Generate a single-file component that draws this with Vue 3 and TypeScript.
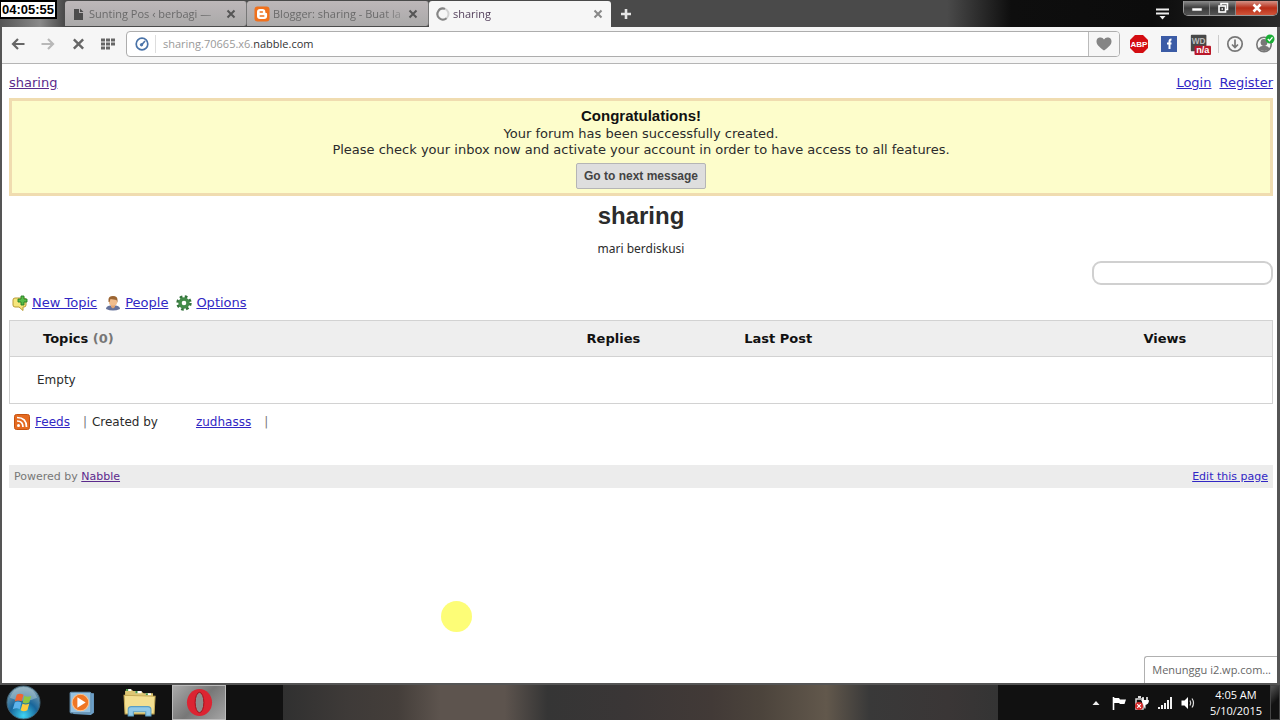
<script setup lang="ts">
import { ref } from 'vue'

interface Tab {
  title: string
  icon: 'page' | 'blogger' | 'spinner'
  active: boolean
}

const tabs: Tab[] = [
  { title: 'Sunting Pos ‹ berbagi —', icon: 'page', active: false },
  { title: 'Blogger: sharing - Buat la', icon: 'blogger', active: false },
  { title: 'sharing', icon: 'spinner', active: true },
]

const search = ref('')
</script>

<template>
  <div class="desktop">
    <div class="timer">04:05:55</div>

    <header class="titlebar">
      <div v-for="tab in tabs" :key="tab.title" class="tab" :class="{ active: tab.active }">
        <svg v-if="tab.icon === 'page'" class="tab-icon" viewBox="0 0 14 14">
          <path d="M2 2h5v4h4v7H2z" fill="#4c4c4c" /><path d="M8 1.500L11.500 5H8z" fill="#4c4c4c" />
        </svg>
        <svg v-else-if="tab.icon === 'blogger'" class="tab-icon big" viewBox="0 0 16 16">
          <rect x="0.500" y="0.500" width="15" height="15" rx="3" fill="#f0701c" />
          <path d="M6 3h2.500A2.800 2.800 0 0 1 11.300 5.800c0 .8.2 1.200 1 1.200.5 0 .8.3.8.8V10a3 3 0 0 1-3 3H6a3 3 0 0 1-3-3V6a3 3 0 0 1 3-3z" fill="#fff" />
          <path d="M6.200 6h2.200M6.200 10h3.600" stroke="#f0701c" stroke-width="1.500" stroke-linecap="round" />
        </svg>
        <svg v-else class="tab-icon" viewBox="0 0 14 14" fill="none" stroke-width="2">
          <circle cx="7" cy="7" r="5.500" stroke="#d2d2d2" />
          <path d="M9 1.900A5.500 5.500 0 1 0 10.500 11.200" stroke="#858585" />
        </svg>
        <span class="tab-title">{{ tab.title }}</span>
        <button class="tab-close" aria-label="Close tab">
          <svg viewBox="0 0 10 10"><path d="M1.500 1.500l7 7M8.500 1.500l-7 7" stroke="currentColor" stroke-width="2" /></svg>
        </button>
      </div>
      <button class="new-tab" aria-label="New tab">
        <svg viewBox="0 0 12 12"><path d="M6 1v10M1 6h10" stroke="#e4e4e4" stroke-width="2.600" /></svg>
      </button>
      <button class="tab-menu" aria-label="Tab menu">
        <svg viewBox="0 0 13 12"><path d="M0 1.500h13M0 5.500h13" stroke="#eee" stroke-width="1.800" /><path d="M3.500 8h6l-3 3.500z" fill="#eee" /></svg>
      </button>
      <div class="window-buttons">
        <button aria-label="Minimize">
          <svg viewBox="0 0 14 12"><rect x="2" y="6" width="10" height="3" fill="#fff" stroke="#555" stroke-width="0.600" /></svg>
        </button>
        <button aria-label="Restore">
          <svg viewBox="0 0 14 12" fill="none" stroke="#fff" stroke-width="1.600"><path d="M5 3V1.500h6.500v6H10" /><rect x="3" y="4" width="6.500" height="6" /><path d="M5.500 7h1.500" /></svg>
        </button>
        <button class="close" aria-label="Close">
          <svg viewBox="0 0 14 12"><path d="M3.500 2.500l7 7M10.500 2.500l-7 7" stroke="#fff" stroke-width="2.600" /></svg>
        </button>
      </div>
    </header>

    <div class="window">
      <nav class="toolbar">
        <button class="tool" aria-label="Back">
          <svg viewBox="0 0 14 14" fill="none" stroke="#666" stroke-width="2.200"><path d="M13.500 7H2M7 2L2 7l5 5" /></svg>
        </button>
        <button class="tool" aria-label="Forward">
          <svg viewBox="0 0 14 14" fill="none" stroke="#b8b8b8" stroke-width="2.200"><path d="M.5 7H12M7 2l5 5-5 5" /></svg>
        </button>
        <button class="tool stop" aria-label="Stop">
          <svg viewBox="0 0 14 14" fill="none" stroke="#666" stroke-width="2.600"><path d="M2 2l10 10M12 2L2 12" /></svg>
        </button>
        <button class="tool" aria-label="Speed dial">
          <svg viewBox="0 0 14 14" fill="#666"><path d="M0 1.500h4v3H0zM5 1.500h4v3H5zM10 1.500h4v3h-4zM0 5.500h4v3H0zM5 5.500h4v3H5zM10 5.500h4v3h-4zM0 9.500h4v3H0zM5 9.500h4v3H5z" /></svg>
        </button>
        <div class="address">
          <svg class="badge" viewBox="0 0 14 14" fill="none" stroke="#4a73a8"><circle cx="7" cy="7" r="5.800" stroke-width="1.700" /><path d="M6.500 8L10 4" stroke-width="1.600" /><circle cx="6.500" cy="7.800" r="1.200" fill="#4a73a8" /></svg>
          <span class="divider"></span>
          <span class="url">sharing.70665.x6.<b>nabble.com</b></span>
          <button class="heart" aria-label="Bookmark">
            <svg viewBox="0 0 16 14"><path d="M8 13.500C3 9.800.5 7.500.5 4.500A4 4 0 0 1 8 2.500a4 4 0 0 1 7.500 2c0 3-2.500 5.300-7.500 9z" fill="#858585" /></svg>
          </button>
        </div>
        <div class="extensions">
          <button aria-label="Adblock Plus">
            <svg viewBox="0 0 20 20"><path d="M6 1h8l5 5v8l-5 5H6l-5-5V6z" fill="#d40d12" /><text x="10" y="13" text-anchor="middle" class="abp">ABP</text></svg>
          </button>
          <button aria-label="Facebook">
            <svg viewBox="0 0 20 20"><rect x="2" y="2" width="16" height="16" fill="#3b5ba5" /><path d="M10.500 15V7.500Q10.500 5.500 12.500 5.500M8 9.500h4.500" stroke="#fff" stroke-width="2" fill="none" /></svg>
          </button>
          <button aria-label="WD">
            <svg viewBox="0 0 24 24"><rect x="2" y="2" width="17" height="18" rx="1" fill="#484848" /><text x="10.500" y="12" text-anchor="middle" class="wd">WD</text><rect x="6" y="14" width="18" height="10" rx="1" fill="#b9182a" /><text x="15" y="22" text-anchor="middle" class="na">n/a</text></svg>
          </button>
          <span class="rule"></span>
          <button aria-label="Downloads">
            <svg viewBox="0 0 20 20" fill="none" stroke="#777" stroke-width="1.700"><circle cx="10" cy="10" r="7.200" /><path d="M10 5.500v8M7 10.500l3 3 3-3" /></svg>
          </button>
          <button aria-label="Account">
            <svg viewBox="0 0 20 20"><circle cx="9" cy="10.500" r="7.200" fill="none" stroke="#777" stroke-width="1.600" /><circle cx="9" cy="8.500" r="3.400" fill="#777" /><path d="M3.500 15q1-3 4-3h3q3 0 4 3-5 4-11 0z" fill="#777" /><circle cx="15" cy="5" r="4.500" fill="#19ae35" /><path d="M12.800 5l1.700 1.700 3-3.400" fill="none" stroke="#fff" stroke-width="1.300" /></svg>
          </button>
        </div>
      </nav>

      <main class="page">
        <div class="crumbs">
          <a href="#" class="visited">sharing</a>
          <span class="account"><a href="#">Login</a><a href="#">Register</a></span>
        </div>

        <section class="notice">
          <h2>Congratulations!</h2>
          <p>Your forum has been successfully created.</p>
          <p>Please check your inbox now and activate your account in order to have access to all features.</p>
          <button class="next">Go to next message</button>
        </section>

        <h1>sharing</h1>
        <p class="tagline">mari berdiskusi</p>
        <input v-model="search" class="search" type="text" aria-label="Search" />

        <div class="actions">
          <a href="#">
            <svg viewBox="0 0 16 16"><path d="M3 3h9q2 0 2 2v5q0 2-2 2h-1v3.500L7 12H3q-2 0-2-2V5q0-2 2-2z" fill="#f6e67c" stroke="#b89a35" /><path d="M9 1h3v3h3v3h-3v3H9V7H6V4h3z" fill="#57bd4a" stroke="#267d25" stroke-width="0.900" /></svg>
            <span>New Topic</span>
          </a>
          <a href="#">
            <svg viewBox="0 0 16 16"><path d="M1 14q0-3 4-3.500h6q4 .5 4 3.500-7 3-14 0z" fill="#65729b" /><path d="M6 9h4v3l-2 1.500L6 12z" fill="#e1a474" /><rect x="4" y="1.500" width="8" height="9" rx="3" fill="#f0bd8d" /><path d="M3.500 7V4Q4 1 8 1q4.500 0 4.500 4v3l-1-3-6-1-1 3z" fill="#9b6533" /></svg>
            <span>People</span>
          </a>
          <a href="#">
            <svg viewBox="0 0 16 16" fill="none"><circle cx="8" cy="8" r="6.300" stroke="#33733b" stroke-width="2.800" stroke-dasharray="2.600 2.350" /><circle cx="8" cy="8" r="4" stroke="#438b49" stroke-width="3.400" /></svg>
            <span>Options</span>
          </a>
        </div>

        <table>
          <thead>
            <tr>
              <th class="topics">Topics <span>(0)</span></th>
              <th class="replies">Replies</th>
              <th class="last">Last Post</th>
              <th class="views">Views</th>
            </tr>
          </thead>
          <tbody>
            <tr><td colspan="4">Empty</td></tr>
          </tbody>
        </table>

        <div class="meta">
          <svg viewBox="0 0 16 16" fill="none"><rect x="0.500" y="0.500" width="15" height="15" rx="2" fill="#e56a20" stroke="#c7530f" /><circle cx="4.500" cy="11.500" r="1.500" fill="#fff" /><path d="M3 7q6 0 6 6M3 3.500q9.500 0 9.500 9.500" stroke="#fff" stroke-width="1.700" /></svg>
          <a href="#">Feeds</a>
          <span class="bar">|</span>
          <span>Created by</span>
          <a href="#" class="author">zudhasss</a>
          <span class="bar">|</span>
        </div>

        <footer>
          <span>Powered by <a href="#" class="visited">Nabble</a></span>
          <a href="#" class="edit">Edit this page</a>
        </footer>

        <div class="pointer"></div>
        <div class="status">Menunggu i2.wp.com...</div>
      </main>
    </div>

    <div class="taskbar">
      <button class="start" aria-label="Start">
        <svg viewBox="0 0 36 36">
          <defs>
            <radialGradient id="orb" cx="50%" cy="90%" r="85%"><stop offset="0" stop-color="#3fd4f4" /><stop offset="0.500" stop-color="#18669b" /><stop offset="1" stop-color="#7e9fb0" /></radialGradient>
          </defs>
          <circle cx="18" cy="18" r="17" fill="url(#orb)" stroke="#406274" />
          <path d="M4 13Q8 2 18 2t14 11Q18 20 4 13z" fill="#b9d0d9" opacity="0.450" />
          <path d="M11 10q3-2 7 0l-2 7q-3-2-7 0z" fill="#ef6532" /><path d="M19 11q3 2 7 0l-2 7q-4 2-7 0z" fill="#8fc641" /><path d="M9 18q3-2 7 0l-2 7q-3-2-7 0z" fill="#5db4ec" /><path d="M17 19q3 2 7 0l-2 7q-4 2-7 0z" fill="#fccb3d" />
        </svg>
      </button>
      <button class="task" aria-label="Media Player">
        <svg viewBox="0 0 28 28"><path d="M7 4l19 1v19l-3 2-17-1z" fill="#6c9fc7" /><rect x="3" y="4" width="20" height="20" rx="1" fill="#96c2e1" stroke="#638fae" /><circle cx="13" cy="14" r="8" fill="#ef7624" stroke="#ffc087" /><path d="M10 9l8 5-8 5z" fill="#fff" /></svg>
      </button>
      <button class="task" aria-label="Explorer">
        <svg viewBox="0 0 32 28"><path d="M2 3l5-2 3 2h7l3 2h9v18H2z" fill="#ddc673" /><path d="M3 2h5M12 4h6M22 6h5" stroke="#fff" stroke-width="2" /><path d="M3 2h2M12 4h2M22 6h2" stroke="#469646" stroke-width="2" /><path d="M1 7l30 1-1 17H2z" fill="#f3df91" stroke="#c6ab58" /><path d="M5 27v-6q0-3 3-3h16q3 0 3 3v6h-5v-4H10v4z" fill="#91c9e8" stroke="#5a9ec4" /></svg>
      </button>
      <button class="task current" aria-label="Opera">
        <svg viewBox="0 0 30 30"><ellipse cx="15" cy="15" rx="13" ry="14" fill="#dc2432" /><ellipse cx="15" cy="15" rx="4.500" ry="10.500" fill="#8d8d8d" stroke="#a40d18" /></svg>
      </button>
      <div class="glass"></div>
      <div class="tray">
        <svg viewBox="0 0 16 16"><path d="M4.500 10L8 6l3.500 4z" fill="#eee" /></svg>
        <svg viewBox="0 0 16 16"><path d="M2.500 2v13" stroke="#fff" stroke-width="1.600" /><path d="M3 3h5l1 1.500h6L13.500 9H9L8 8H3z" fill="#fff" /></svg>
        <svg viewBox="0 0 16 16" fill="none"><rect x="2" y="4" width="7" height="10" stroke="#ddd" stroke-width="1.500" /><path d="M4 2h3" stroke="#ddd" stroke-width="2" /><path d="M9 2v4M13 2v4" stroke="#fff" stroke-width="1.500" /><path d="M7.500 5.500h7q0 4-3.500 4v4" fill="#fff" stroke="#fff" /><circle cx="5" cy="11" r="4" fill="#d52929" /><path d="M3.200 9.200l3.600 3.600M6.800 9.200l-3.600 3.600" stroke="#fff" stroke-width="1.200" /></svg>
        <svg viewBox="0 0 16 16"><path d="M1 12h2v2H1zM4 10h2v4H4zM7 8h2v6H7zM10 5h2v9h-2zM13 2h2v12h-2z" fill="#eee" /></svg>
        <svg viewBox="0 0 16 16" fill="none"><path d="M1.500 5.500h3L8 2v12l-3.500-3.500h-3z" fill="#fff" /><path d="M10 5.500q1.500 2.500 0 5M12 3.500q3 4.500 0 9" stroke="#ddd" stroke-width="1.200" /></svg>
        <time class="clock"><span>4:05 AM</span><span>5/10/2015</span></time>
      </div>
      <button class="peek" aria-label="Show desktop"></button>
    </div>
  </div>
</template>

<style>
body {
  margin: 0;
}
</style>

<style scoped>
.desktop {
  position: relative;
  display: flex;
  flex-direction: column;
  min-height: 100vh;
  background: #4b4b4b;
  font-family: "DejaVu Sans", Verdana, sans-serif;
  font-size: 13px;
  color: #2b2b2b;
}
.desktop * {
  box-sizing: border-box;
}
button {
  padding: 0;
  border: 0;
  background: none;
  font: inherit;
}
svg {
  display: block;
  flex: none;
}
h1, h2, p {
  margin: 0;
}
.timer {
  position: absolute;
  z-index: 2;
  left: 0;
  top: 0;
  padding: 0 1px;
  border: 2px solid #000;
  border-left-width: 1px;
  background: #fff;
  color: #000;
  font: bold 13px/15px "Liberation Sans", Arial, sans-serif;
}

/* Title bar with tabs */
.titlebar {
  display: flex;
  height: 27px;
  padding: 1px 2px 0 65px;
  background: linear-gradient(90deg, #555 0, #8a8a8a 40px, #4a4a4a 64px, #4a4a4a 74%, #0e0e0e 79%, #0c0c0c 90%, #2a2a2a);
}
.tab {
  display: flex;
  align-items: center;
  width: 182px;
  height: 25px;
  padding: 0 10px 0 7px;
  gap: 3px;
  border-right: 1px solid #777;
  border-radius: 3px 3px 3px 0;
  background: linear-gradient(#bdb7b9, #aaa9a9);
  color: #6a6a6a;
  font: 11px/16px "Open Sans", "Noto Sans", sans-serif;
}
.tab.active {
  height: 26px;
  border-right: 0;
  border-radius: 3px 3px 0 0;
  background: #f6f6f6;
  color: #54405c;
}
.tab-icon {
  width: 14px;
  height: 14px;
}
.tab-icon.big {
  width: 16px;
  height: 16px;
}
.tab-title {
  flex: 1;
  white-space: nowrap;
  mask-image: linear-gradient(90deg, #000 85%, rgb(0 0 0 / 35%));
}
.tab-close {
  margin-left: 2px;
  color: #555;
}
.active .tab-close {
  margin-right: -2px;
  color: #888;
}
.tab-close svg {
  width: 10px;
  height: 10px;
}
.new-tab {
  width: 30px;
}
.new-tab svg {
  width: 12px;
  height: 12px;
  margin: 0 auto;
}
.tab-menu {
  margin-left: auto;
  margin-right: 14px;
}
.tab-menu svg {
  width: 13px;
  height: 12px;
}
.window-buttons {
  display: flex;
  height: 15px;
  border: 1px solid #999;
  border-top: 0;
  border-radius: 0 0 5px 5px;
  overflow: hidden;
}
.window-buttons button {
  display: flex;
  align-items: center;
  justify-content: center;
  width: 26px;
  border-right: 1px solid #888;
  background: linear-gradient(#8d8d8d, #3b3b3b 50%, #555);
}
.window-buttons .close {
  width: 41px;
  border-right: 0;
  background: linear-gradient(#d59286, #b82d17 50%, #d0553a);
}
.window-buttons svg {
  width: 14px;
  height: 12px;
}

/* Browser window */
.window {
  flex: 1;
  display: flex;
  flex-direction: column;
  border: 2px solid #555;
  border-width: 0 3px 2px 2px;
}
.toolbar {
  display: flex;
  align-items: center;
  height: 37px;
  padding: 0 2px 2px 1px;
  border-bottom: 1px solid #b5b5b5;
  background: #f6f6f6;
}
.tool {
  width: 30px;
}
.tool svg {
  width: 14px;
  height: 14px;
  margin: 0 auto;
}
.tool.stop svg {
  width: 13px;
}
.address {
  flex: 1;
  display: flex;
  align-items: center;
  height: 26px;
  margin-left: 3px;
  padding-left: 8px;
  border: 1px solid #adadad;
  border-radius: 4px;
  background: #fff;
}
.badge {
  width: 14px;
  height: 14px;
}
.divider {
  width: 1px;
  height: 18px;
  margin: 0 7px 0 6px;
  background: #ddd;
}
.url {
  flex: 1;
  color: #999;
  font: 11px/16px "Open Sans", "Noto Sans", sans-serif;
}
.url b {
  color: #333;
  font-weight: normal;
}
.heart {
  display: flex;
  align-items: center;
  justify-content: center;
  width: 31px;
  height: 24px;
  border-left: 1px solid #bbb;
  border-radius: 0 3px 3px 0;
  background: #f6f6f6;
}
.heart svg {
  width: 16px;
  height: 14px;
}
.extensions {
  display: flex;
  align-items: center;
  gap: 10px;
  margin-left: 9px;
}
.extensions svg {
  width: 20px;
  height: 20px;
}
.extensions button:nth-child(3) svg {
  width: 22px;
  height: 22px;
}
.extensions .rule {
  width: 1px;
  height: 18px;
  margin: 0 -4px 0 -3px;
  background: #ccc;
}
.abp, .na, .wd {
  fill: #fff;
  font: bold 8px "Liberation Sans", Arial, sans-serif;
}
.na {
  font-size: 10px;
}
.wd {
  fill: #bbb;
  font-size: 9px;
}

/* Forum page */
.page {
  position: relative;
  flex: 1;
  padding: 9px 4px 24px 7px;
  background: #fff;
}
a {
  color: #3127c4;
}
a.visited {
  color: #5b2a8c;
}
.crumbs {
  display: flex;
  justify-content: space-between;
  line-height: 20px;
}
.account {
  display: flex;
  gap: 8px;
}
.notice {
  margin-top: 5px;
  padding: 6px 8px 4px;
  border: 3px solid #f0dcb0;
  background: #fdfdcb;
  text-align: center;
  line-height: 16px;
}
.notice h2 {
  margin-bottom: 1px;
  color: #111;
  font: bold 15px/18px "Liberation Sans", Arial, sans-serif;
}
.notice .next {
  display: block;
  height: 26px;
  margin: 5px auto 0;
  padding: 0 7px;
  border: 1px solid #b5b5b5;
  border-radius: 2px;
  background: #dedede;
  color: #444;
  font: bold 12px/22px "Liberation Sans", Arial, sans-serif;
}
h1 {
  margin-top: 6px;
  text-align: center;
  font: bold 24px/28px "Liberation Sans", Arial, sans-serif;
}
.tagline {
  margin-top: 11px;
  text-align: center;
  font: 12px/16px "Noto Sans", "Open Sans", sans-serif;
}
.search {
  display: block;
  width: 181px;
  height: 24px;
  margin: 4px 0 0 auto;
  padding: 0 10px;
  border: 2px solid #d0d0d0;
  border-radius: 9px;
  background: #fff;
  font: inherit;
}
.actions {
  display: flex;
  gap: 8px;
  margin: 8px 0 7px 3px;
  line-height: 20px;
}
.actions a {
  display: flex;
  align-items: center;
  gap: 4px;
  text-decoration: none;
}
.actions span {
  text-decoration: underline;
}
.actions svg, .meta svg {
  width: 16px;
  height: 16px;
}
table {
  width: 100%;
  border: 1px solid #d2d2d2;
  border-collapse: collapse;
  table-layout: fixed;
}
th {
  height: 36px;
  padding: 0;
  border-bottom: 1px solid #d2d2d2;
  background: #eee;
  color: #111;
  line-height: 16px;
}
th span {
  color: #777;
}
.topics {
  width: 43%;
  padding-left: 33px;
  text-align: left;
}
.replies {
  width: 9%;
  padding-left: 8px;
}
.last {
  width: 31%;
  padding-left: 78px;
  text-align: left;
}
.views {
  width: 17%;
}
td {
  height: 47px;
  padding: 0 27px;
  font-size: 12px;
}
.meta {
  display: flex;
  align-items: center;
  height: 20px;
  margin: 8px 0 0 5px;
  gap: 5px;
  font-size: 12px;
}
.bar {
  margin-left: 8px;
  color: #777;
}
.author {
  margin-left: 33px;
}
footer {
  display: flex;
  justify-content: space-between;
  margin-top: 33px;
  padding: 0 5px;
  background: #ececec;
  color: #777;
  font-size: 11px;
  line-height: 23px;
}
.pointer {
  position: absolute;
  left: 439px;
  bottom: 51px;
  width: 31px;
  height: 31px;
  border-radius: 50%;
  background: #fdfd77;
}
.status {
  position: absolute;
  right: 0;
  bottom: 0;
  padding: 0 6px 0 7px;
  border: 1px solid #b0b0b0;
  border-width: 1px 0 0 1px;
  border-radius: 3px 0 0 0;
  background: #fff;
  color: #666;
  font: 11px/26px "Open Sans", "Noto Sans", sans-serif;
}

/* Taskbar */
.taskbar {
  display: flex;
  align-items: center;
  height: 35px;
  background: #111;
}
.start {
  width: 36px;
  margin: 0 12px 0 6px;
}
.start svg {
  width: 35px;
  height: 35px;
}
.task {
  display: flex;
  align-items: center;
  justify-content: center;
  width: 54px;
  height: 35px;
  margin-right: 5px;
}
.task svg {
  height: 29px;
}
.task.current {
  margin: 0;
  border: 1px solid #bbb;
  background: linear-gradient(135deg, #aaa, #777 50%, #a5a5a5);
}
.glass {
  flex: 1;
  align-self: stretch;
  margin: 0 90px 0 57px;
  background: linear-gradient(90deg, #303030, #3e3a38 9%, #443e3a 16%, #5d544e 22%, #5d544e 31%, #353535 37%, #3a3636 48%, #423a37 60%, #4c443c 67%, #62584c 76%, #393939 82%, #3a3636 93%, #343434);
}
.tray {
  display: flex;
  align-items: center;
  gap: 7px;
}
.tray svg {
  width: 16px;
  height: 16px;
}
.clock {
  display: flex;
  flex-direction: column;
  align-items: center;
  margin-left: 7px;
  color: #fff;
  font: 11px/16px "Open Sans", "Noto Sans", sans-serif;
}
.peek {
  align-self: stretch;
  width: 10px;
  margin-left: 8px;
  border: 1px solid #444;
  background: linear-gradient(135deg, #555, #111 50%);
}
</style>
